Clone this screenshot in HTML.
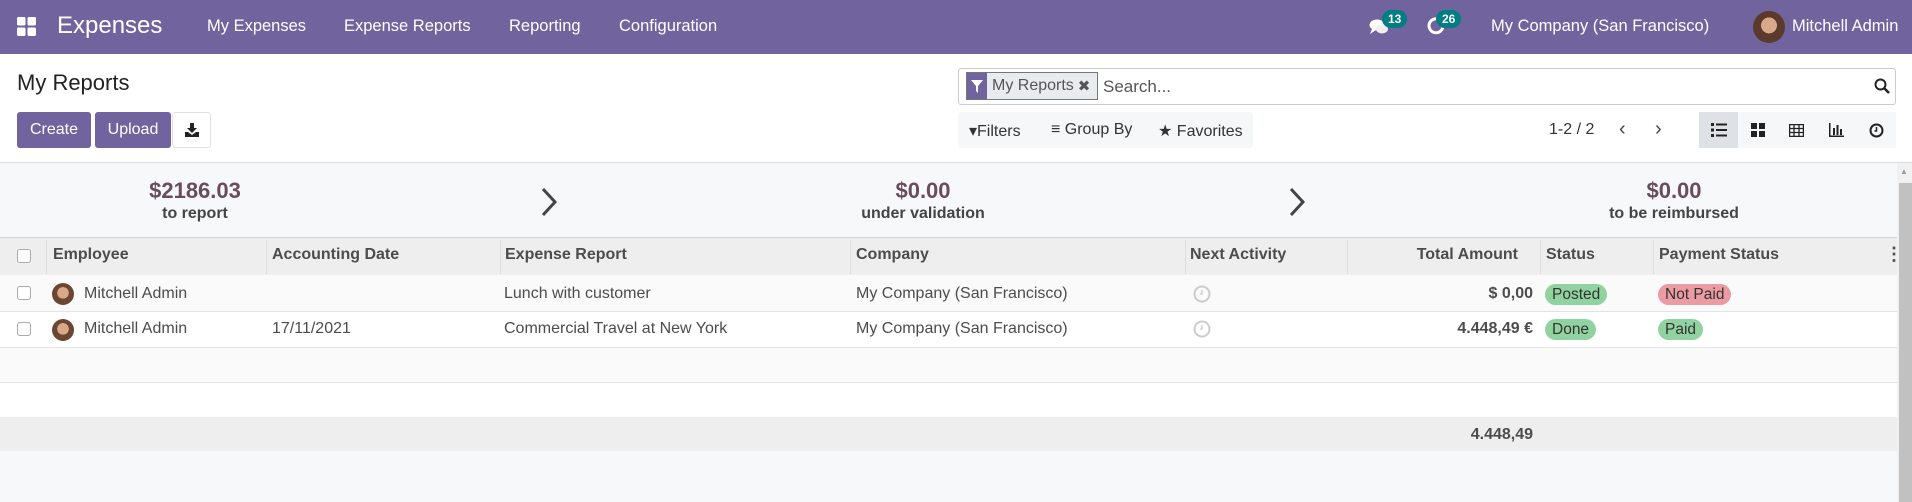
<!DOCTYPE html>
<html><head><meta charset="utf-8"><style>
*{box-sizing:border-box;margin:0;padding:0}
body{width:1912px;height:502px;overflow:hidden;font-family:"Liberation Sans",sans-serif;font-size:16px;color:#4c4c4c;background:#fff;position:relative}
.abs{position:absolute}
.nav{left:0;top:0;width:1912px;height:54px;background:#71639e;color:#fff}
.nav .t{position:absolute;top:0;line-height:52px;font-size:16.5px;white-space:nowrap}
.btn{position:absolute;top:112px;height:36px;line-height:36px;color:#fff;background:#71639e;border-radius:3px;text-align:center;font-size:16px}
.th,.td{position:absolute;white-space:nowrap}
.row{position:absolute;left:0;width:1897px;border-bottom:1px solid #e3e3e3}
.cb{position:absolute;left:17px;width:14px;height:14px;border:1px solid #aaa;border-radius:3px;background:#fff}
.av{position:absolute;left:52px;width:22px;height:22px;border-radius:50%;background:radial-gradient(circle at 50% 45%,#d9a889 0 35%,#6b4633 36% 100%)}
.badge{position:absolute;height:21px;line-height:21px;border-radius:11px;padding:0 7px;font-size:15.5px;color:#333}
.vs{position:absolute;top:112px;height:36px;width:39px;display:flex;align-items:center;justify-content:center}
</style></head><body>
<div class="abs nav">
  <svg class="abs" style="left:17px;top:17px" width="19" height="19" viewBox="0 0 19 19" fill="#fff"><rect x="0" y="0" width="8.5" height="8.5" rx="1.5"/><rect x="10.5" y="0" width="8.5" height="8.5" rx="1.5"/><rect x="0" y="10.5" width="8.5" height="8.5" rx="1.5"/><rect x="10.5" y="10.5" width="8.5" height="8.5" rx="1.5"/></svg>
  <div class="t" style="left:57px;font-size:24px">Expenses</div>
  <div class="t" style="left:207px">My Expenses</div>
  <div class="t" style="left:344px">Expense Reports</div>
  <div class="t" style="left:509px">Reporting</div>
  <div class="t" style="left:619px">Configuration</div>
  <svg class="abs" style="left:1369px;top:18px" width="20" height="18" viewBox="0 0 20 18" fill="#fff"><ellipse cx="8" cy="7" rx="7.5" ry="5.5"/><path d="M3 11 L1 16 L7 12Z"/><ellipse cx="13" cy="11" rx="6" ry="4.5" fill="#eee"/></svg>
  <div class="abs" style="left:1382px;top:10px;height:18px;padding:0 6px;border-radius:9px;background:#017e84;font-size:12px;line-height:18px;font-weight:bold">13</div>
  <svg class="abs" style="left:1427px;top:17px" width="18" height="18" viewBox="0 0 18 18"><path d="M13 3 A7 7 0 1 0 16 9" stroke="#fff" stroke-width="3" fill="none"/></svg>
  <div class="abs" style="left:1436px;top:10px;height:18px;padding:0 6px;border-radius:9px;background:#017e84;font-size:12px;line-height:18px;font-weight:bold">26</div>
  <div class="t" style="left:1491px">My Company (San Francisco)</div>
  <div class="abs" style="left:1753px;top:11px;width:32px;height:32px;border-radius:50%;background:radial-gradient(circle at 50% 45%,#d9a889 0 33%,#5a3a2a 34% 100%)"></div>
  <div class="t" style="left:1792px">Mitchell Admin</div>
</div>

<div class="abs" style="left:17px;top:70px;font-size:22px;color:#222">My Reports</div>
<div class="btn" style="left:17px;width:74px">Create</div>
<div class="btn" style="left:95px;width:76px">Upload</div>
<div class="abs" style="left:172px;top:112px;width:39px;height:36px;border:1px solid #dee2e6;border-radius:3px"><svg class="abs" style="left:12px;top:10px" width="14" height="14" viewBox="0 0 14 14" fill="#222"><path d="M5 0h4v5h3L7 10 2 5h3z"/><path d="M0 9h3l4 3 4-3h3v5H0z"/></svg></div>

<div class="abs" style="left:958px;top:68px;width:938px;height:37px;border:1px solid #ccc;border-radius:3px"></div>
<div class="abs" style="left:966px;top:72px;width:132px;height:28px;border:1px solid #777;background:#e9ecef;display:flex;align-items:center">
  <div style="width:20px;height:26px;background:#71639e;display:flex;align-items:center;justify-content:center"><svg width="12" height="13" viewBox="0 0 12 13" fill="#fff"><path d="M0 0h12L7 6v7L5 11V6z"/></svg></div>
  <span style="margin-left:5px;font-size:16px;color:#555">My Reports</span><span style="margin-left:4px;font-size:15px;color:#555">✖</span>
</div>
<div class="abs" style="left:1103px;top:77px;font-size:17px;color:#555">Search...</div>
<svg class="abs" style="left:1874px;top:78px" width="16" height="16" viewBox="0 0 16 16"><circle cx="6.5" cy="6.5" r="5" stroke="#222" stroke-width="2" fill="none"/><path d="M10 10l5 5" stroke="#222" stroke-width="2.5"/></svg>

<div class="abs" style="left:958px;top:112px;width:295px;height:36px;background:#f6f7f9;border-radius:3px"></div>
<div class="abs" style="left:969px;top:121px;font-size:16px;color:#333">▾Filters</div>
<div class="abs" style="left:1051px;top:121px;font-size:16px;color:#333">≡ Group By</div>
<div class="abs" style="left:1158px;top:121px;font-size:16px;color:#333">★ Favorites</div>
<div class="abs" style="left:1549px;top:121px;font-size:16px;color:#333">1-2 / 2</div>
<div class="abs" style="left:1619px;top:118px;font-size:20px;color:#444">‹</div>
<div class="abs" style="left:1655px;top:118px;font-size:20px;color:#444">›</div>
<div class="abs" style="left:1699px;top:112px;width:197px;height:36px;background:#f6f7f9"></div>
<div class="vs" style="left:1699px;background:#dee2e6"><svg width="16" height="14" viewBox="0 0 16 14" fill="#222"><rect x="0" y="0" width="3" height="3"/><rect x="5" y="0.5" width="11" height="2"/><rect x="0" y="5.5" width="3" height="3"/><rect x="5" y="6" width="11" height="2"/><rect x="0" y="11" width="3" height="3"/><rect x="5" y="11.5" width="11" height="2"/></svg></div>
<div class="vs" style="left:1738px"><svg width="14" height="14" viewBox="0 0 14 14" fill="#222"><rect width="6" height="6"/><rect x="8" width="6" height="6"/><rect y="8" width="6" height="6"/><rect x="8" y="8" width="6" height="6"/></svg></div>
<div class="vs" style="left:1777px"><svg width="15" height="13" viewBox="0 0 15 13" fill="none" stroke="#222" stroke-width="1.3"><rect x="0.6" y="0.6" width="13.8" height="11.8"/><path d="M0 4.5h15M0 8.5h15M5 0v13M10 0v13"/></svg></div>
<div class="vs" style="left:1817px"><svg width="15" height="14" viewBox="0 0 15 14" fill="#222"><rect x="0" y="0" width="1.5" height="14"/><rect x="0" y="12.5" width="15" height="1.5"/><rect x="4" y="5" width="2" height="7"/><rect x="7.5" y="2" width="2" height="10"/><rect x="11" y="6" width="2" height="6"/></svg></div>
<div class="vs" style="left:1857px"><svg width="15" height="15" viewBox="0 0 15 15" fill="none" stroke="#222" stroke-width="2"><circle cx="7.5" cy="7.5" r="6"/><path d="M7.5 4v4h-2" stroke-width="1.5"/></svg></div>

<div class="abs" style="left:0;top:162px;width:1912px;height:1px;background:#dcdcdc"></div>
<div class="abs" style="left:0;top:163px;width:1897px;height:75px;background:#f7f8fa"></div>
<div class="abs" style="left:1897px;top:163px;width:15px;height:339px;background:#f1f1f1"></div>
<div class="abs" style="left:1899px;top:183px;width:13px;height:319px;background:#c1c1c1"></div>
<div class="abs" style="left:1900px;top:167px;font-size:8px;color:#999">▲</div>

<div class="abs" style="left:95px;top:178px;width:200px;text-align:center;font-size:22px;font-weight:bold;color:#6a4c5c">$2186.03</div>
<div class="abs" style="left:95px;top:205px;width:200px;text-align:center;font-size:16px;font-weight:bold;color:#444">to report</div>
<div class="abs" style="left:823px;top:178px;width:200px;text-align:center;font-size:22px;font-weight:bold;color:#6a4c5c">$0.00</div>
<div class="abs" style="left:823px;top:205px;width:200px;text-align:center;font-size:16px;font-weight:bold;color:#444">under validation</div>
<div class="abs" style="left:1574px;top:178px;width:200px;text-align:center;font-size:22px;font-weight:bold;color:#6a4c5c">$0.00</div>
<div class="abs" style="left:1574px;top:205px;width:200px;text-align:center;font-size:16px;font-weight:bold;color:#444">to be reimbursed</div>
<svg class="abs" style="left:540px;top:187px" width="18" height="30" viewBox="0 0 18 30"><path d="M3 2l12 13L3 28" stroke="#444" stroke-width="3" fill="none"/></svg>
<svg class="abs" style="left:1288px;top:187px" width="18" height="30" viewBox="0 0 18 30"><path d="M3 2l12 13L3 28" stroke="#444" stroke-width="3" fill="none"/></svg>

<div class="abs" style="left:0;top:237px;width:1897px;height:1px;background:#d6d6d6"></div>
<div class="row" style="top:238px;height:37px;background:#eeeeee;border-bottom:none"></div>
<div class="abs" style="left:46px;top:240px;width:1px;height:34px;background:#dedede"></div>
<div class="abs" style="left:266px;top:240px;width:1px;height:34px;background:#dedede"></div>
<div class="abs" style="left:500px;top:240px;width:1px;height:34px;background:#dedede"></div>
<div class="abs" style="left:850px;top:240px;width:1px;height:34px;background:#dedede"></div>
<div class="abs" style="left:1185px;top:240px;width:1px;height:34px;background:#dedede"></div>
<div class="abs" style="left:1347px;top:240px;width:1px;height:34px;background:#dedede"></div>
<div class="abs" style="left:1540px;top:240px;width:1px;height:34px;background:#dedede"></div>
<div class="abs" style="left:1653px;top:240px;width:1px;height:34px;background:#dedede"></div>
<div class="cb" style="top:249px"></div>
<div class="th" style="left:53px;top:246px;font-weight:bold">Employee</div>
<div class="th" style="left:272px;top:246px;font-weight:bold">Accounting Date</div>
<div class="th" style="left:505px;top:246px;font-weight:bold">Expense Report</div>
<div class="th" style="left:856px;top:246px;font-weight:bold">Company</div>
<div class="th" style="left:1190px;top:246px;font-weight:bold">Next Activity</div>
<div class="th" style="left:1347px;width:171px;text-align:right;top:246px;font-weight:bold">Total Amount</div>
<div class="th" style="left:1546px;top:246px;font-weight:bold">Status</div>
<div class="th" style="left:1659px;top:246px;font-weight:bold">Payment Status</div>
<div class="th" style="left:1885px;top:244px;font-weight:bold;font-size:18px">⋮</div>

<div class="row" style="top:275px;height:37px;background:#fafafa"></div>
<div class="cb" style="top:286px"></div><div class="av" style="top:283px"></div>
<div class="td" style="left:84px;top:285px">Mitchell Admin</div>
<div class="td" style="left:504px;top:285px">Lunch with customer</div>
<div class="td" style="left:856px;top:285px">My Company (San Francisco)</div>
<svg class="abs" style="left:1193px;top:285px" width="18" height="18" viewBox="0 0 18 18" fill="none" stroke="#ccc" stroke-width="2"><circle cx="9" cy="9" r="7.5"/><path d="M9 5v4h-2" stroke-width="1.3"/></svg>
<div class="td" style="left:1347px;width:186px;text-align:right;top:285px;font-weight:bold">$ 0,00</div>
<div class="badge" style="left:1545px;top:284px;background:#90d3a0">Posted</div>
<div class="badge" style="left:1658px;top:284px;background:#eb9ba3">Not Paid</div>

<div class="row" style="top:312px;height:36px;background:#fff"></div>
<div class="cb" style="top:322px"></div><div class="av" style="top:319px"></div>
<div class="td" style="left:84px;top:320px">Mitchell Admin</div>
<div class="td" style="left:272px;top:320px">17/11/2021</div>
<div class="td" style="left:504px;top:320px">Commercial Travel at New York</div>
<div class="td" style="left:856px;top:320px">My Company (San Francisco)</div>
<svg class="abs" style="left:1193px;top:320px" width="18" height="18" viewBox="0 0 18 18" fill="none" stroke="#ccc" stroke-width="2"><circle cx="9" cy="9" r="7.5"/><path d="M9 5v4h-2" stroke-width="1.3"/></svg>
<div class="td" style="left:1347px;width:186px;text-align:right;top:320px;font-weight:bold">4.448,49 €</div>
<div class="badge" style="left:1545px;top:319px;background:#90d3a0">Done</div>
<div class="badge" style="left:1658px;top:319px;background:#90d3a0">Paid</div>

<div class="row" style="top:348px;height:35px;background:#fafafa"></div>
<div class="row" style="top:383px;height:34px;background:#fff;border-bottom:none"></div>
<div class="row" style="top:417px;height:34px;background:#eeeeee;border-bottom:none"></div>
<div class="td" style="left:1347px;width:186px;text-align:right;top:426px;font-weight:bold">4.448,49</div>
<div class="abs" style="left:0;top:451px;width:1897px;height:51px;background:#f7f8fa"></div>
</body></html>
